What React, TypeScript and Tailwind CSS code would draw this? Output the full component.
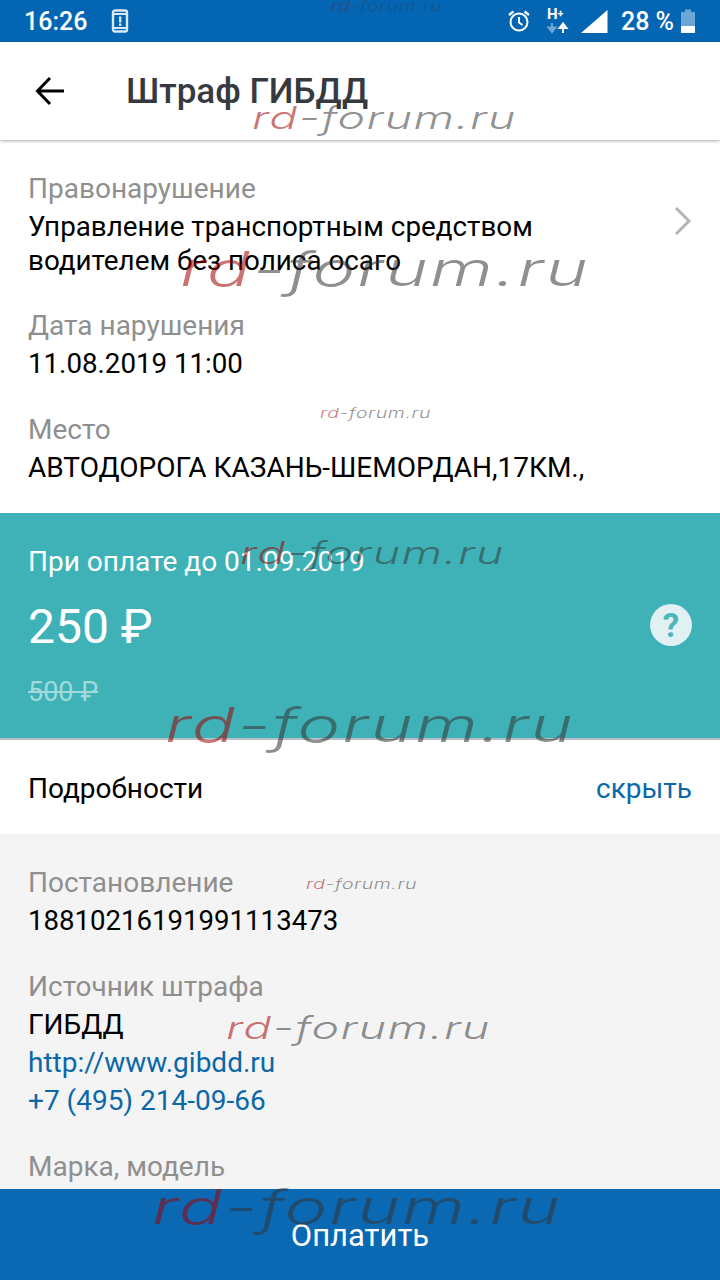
import React from "react";

function Mark({ cls }: { cls: string }) {
  return (
    <div className={"absolute italic whitespace-nowrap leading-none font-light tracking-[0.03em] origin-top-left scale-x-[1.5] pointer-events-none " + cls} style={{ fontFamily: "Inter, sans-serif" }}>
      <span className="text-[#a00000]/55">rd</span>
      <span className="text-[#333333]/55">-forum.ru</span>
    </div>
  );
}

function Field({ label, children, className }: { label: string; children: React.ReactNode; className?: string }) {
  return (
    <div className={"text-[28px] leading-[38px] " + (className ?? "")}>
      <div className="text-[#8f8f8f]">{label}</div>
      <div className="text-black">{children}</div>
    </div>
  );
}

export default function App() {
  return (
    <div className="relative w-[720px] h-[1280px] overflow-hidden flex flex-col bg-white" style={{ fontFamily: "Roboto, sans-serif" }}>
      <div className="h-[42px] shrink-0 bg-[#0466b3] flex items-center pl-[24px] pr-[25px] text-white">
        <span className="text-[25px] font-medium leading-none">16:26</span>
        <svg className="ml-[24px]" width="18" height="24" viewBox="0 0 18 24" fill="none">
          <rect x="2" y="1.5" width="14" height="21" rx="2" stroke="#d8e8f4" strokeWidth="2.4" />
          <rect x="2" y="4" width="14" height="2" fill="#d8e8f4" />
          <rect x="2" y="18" width="14" height="2" fill="#d8e8f4" />
          <rect x="8" y="7.5" width="2.4" height="6" fill="#d8e8f4" />
          <rect x="8" y="14.5" width="2.4" height="2.4" fill="#d8e8f4" />
        </svg>
        <div className="ml-auto flex items-center">
          <svg width="24" height="24" viewBox="0 0 24 24" fill="none" stroke="#fff" strokeWidth="2">
            <circle cx="12" cy="13" r="8.5" />
            <path d="M12 8v5.5l3.5 2.5" />
            <path d="M2 6l4.5-3.5M22 6l-4.5-3.5" strokeWidth="2.4" />
          </svg>
          <div className="ml-[16px] w-[22px] h-[30px] flex flex-col items-start">
            <span className="text-[15px] font-bold leading-[16px]">H<span className="text-[11px] align-top">+</span></span>
            <svg width="22" height="12" viewBox="0 0 22 12">
              <path d="M5 1v6M1.500 5.500L5 10l3.500-4.500z" stroke="#6ca6d6" strokeWidth="2" fill="#6ca6d6" />
              <path d="M16 11V5M12.500 6L16 1.500 19.500 6z" stroke="#fff" strokeWidth="2" fill="#fff" />
            </svg>
          </div>
          <svg className="ml-[12px]" width="27" height="24" viewBox="0 0 27 24"><path d="M26.500 1v23H0z" fill="#fff" /></svg>
          <span className="ml-[13px] text-[25px] font-medium leading-none">28 %</span>
          <svg className="ml-[7px]" width="14" height="24" viewBox="0 0 14 24">
            <rect x="4" y="0.500" width="6" height="3" fill="#6ca6d6" />
            <rect x="0" y="3" width="14" height="14" fill="#6ca6d6" />
            <rect x="0" y="17" width="14" height="7" fill="#fff" />
          </svg>
        </div>
      </div>

      <div className="h-[98px] shrink-0 bg-white flex items-center pl-[34px] shadow-[0_1px_3px_rgba(0,0,0,0.35)] relative">
        <svg width="30" height="32" viewBox="0 0 30 32" fill="none" stroke="#000" strokeWidth="3">
          <path d="M30 16H4M16 3L3.500 16 16 29" />
        </svg>
        <span className="ml-[62px] text-[35px] font-medium text-[#363a40] leading-none pt-[1px]">Штраф ГИБДД</span>
      </div>

      <div className="h-[373px] shrink-0 bg-white pt-[30px] pl-[28px] pr-[28px] flex flex-col">
        <div className="flex items-center">
          <div className="flex-1">
            <div className="text-[28px] leading-[38px] text-[#8f8f8f]">Правонарушение</div>
            <div className="text-[27.8px] leading-[34px] text-black mt-[2px]">Управление транспортным средством<br />водителем без полиса осаго</div>
          </div>
          <svg className="mb-[6px]" width="18" height="30" viewBox="0 0 18 30" fill="none" stroke="#b5b5b5" strokeWidth="3">
            <path d="M2 2l13 13L2 28" />
          </svg>
        </div>
        <Field label="Дата нарушения" className="mt-[29px]"><span className="text-[27.7px]">11.08.2019 11:00</span></Field>
        <Field label="Место" className="mt-[28px]">АВТОДОРОГА КАЗАНЬ-ШЕМОРДАН,17КМ.,</Field>
      </div>

      <div className="h-[227px] shrink-0 bg-[#3eb2b7] border-b-2 border-[#b4c0c2] pl-[28px] pr-[28px] pt-[30px] flex flex-col text-white relative">
        <div className="text-[28px] leading-[38px]">При оплате до 01.09.2019</div>
        <div className="flex items-center justify-between mt-[17px]">
          <span className="text-[48px] leading-[58px]">250 ₽</span>
          <div className="w-[42px] h-[42px] mb-[4px] rounded-full bg-[#e0f0f3] flex items-center justify-center text-[#4fb5bb] text-[33px] font-bold leading-none">?</div>
        </div>
        <div className="mt-[19px] text-[27px] leading-[34px] text-[#a0dadc] line-through">500 ₽</div>
      </div>

      <div className="h-[94px] shrink-0 bg-white flex items-center justify-between pl-[28px] pr-[28px] pt-[3px] text-[28px]">
        <span className="text-black">Подробности</span>
        <span className="text-[#0b68a8]">скрыть</span>
      </div>

      <div className="flex-1 min-h-0 overflow-hidden bg-[#f4f4f5] pt-[30px] pl-[28px] pr-[28px]">
        <Field label="Постановление"><span className="text-[27.6px]">18810216191991113473</span></Field>
        <Field label="Источник штрафа" className="mt-[28px]">
          ГИБДД
          <br />
          <span className="text-[#0b68a8]">http://www.gibdd.ru</span>
          <br />
          <span className="text-[#0b68a8]">+7 (495) 214-09-66</span>
        </Field>
        <Field label="Марка, модель" className="mt-[28px]">—</Field>
      </div>

      <div className="h-[91px] shrink-0 bg-[#0b68b3] flex items-center justify-center text-white text-[31px] pt-[4px]">Оплатить</div>

      <Mark cls="left-[331px] top-[0px] text-[13px] opacity-60" />
      <Mark cls="left-[252px] top-[102px] text-[31px]" />
      <Mark cls="left-[180px] top-[245px] text-[48px]" />
      <Mark cls="left-[320px] top-[407px] text-[13px]" />
      <Mark cls="left-[240px] top-[537px] text-[31px]" />
      <Mark cls="left-[165px] top-[701px] text-[48px]" />
      <Mark cls="left-[306px] top-[878px] text-[13px]" />
      <Mark cls="left-[226px] top-[1012px] text-[31px]" />
      <Mark cls="left-[152px] top-[1183px] text-[48px]" />
    </div>
  );
}
